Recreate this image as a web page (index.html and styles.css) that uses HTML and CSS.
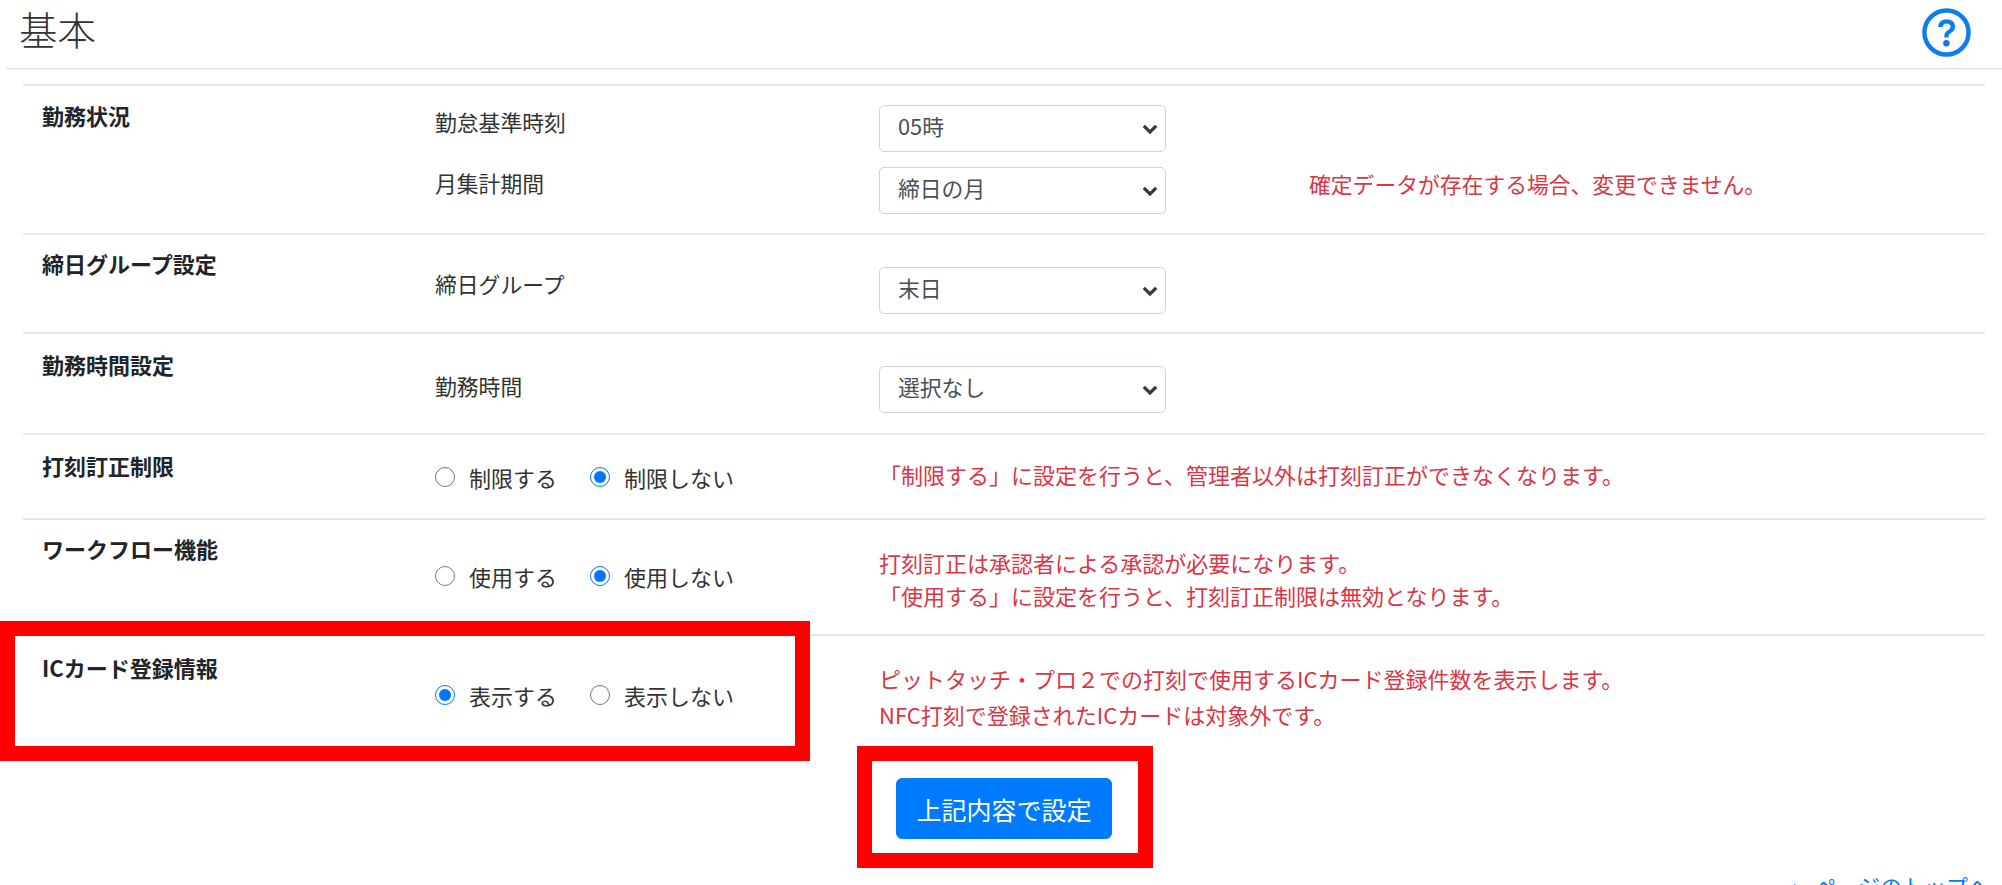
FILE: index.html
```html
<!DOCTYPE html>
<html lang="ja">
<head>
<meta charset="utf-8">
<title>基本</title>
<link rel="stylesheet" href="styles.css">
</head>
<body>
<main class="page">
  <header class="title-bar">
    <h1 class="title">基本</h1>
    <svg class="help" viewBox="0 0 50 50" aria-label="ヘルプ">
      <circle cx="25" cy="25" r="22.5" fill="none" stroke="#0d7bf2" stroke-width="4.5"/>
      <path d="M16.5 19.5c0-5 3.8-8 8.7-8 5 0 8.6 3 8.6 7.300 0 3.200-1.600 4.900-4 6.500-2 1.300-2.700 2.100-2.700 4.700h-4.400c0-3.800 1.100-5.500 3.600-7.200 2-1.300 2.900-2.200 2.900-3.800 0-2-1.600-3.300-3.900-3.300-2.500 0-4.100 1.500-4.200 3.800z" fill="#0d7bf2"/>
      <circle cx="24.900" cy="36" r="3.300" fill="#0d7bf2"/>
    </svg>
  </header>

  <section class="settings">
    <div class="row row-status">
      <div class="row-label">勤務状況</div>
      <div class="field-stack">
        <div class="field-line">
          <span class="field-name">勤怠基準時刻</span>
          <span class="select-wrap">
            <select class="select"><option>05時</option></select>
            <svg class="chevron" viewBox="0 0 16 10"><path d="M1.800 1.800 8 8l6.200-6.200" fill="none" stroke="#343a40" stroke-width="3.200"/></svg>
          </span>
        </div>
        <div class="field-line">
          <span class="field-name">月集計期間</span>
          <span class="select-wrap">
            <select class="select"><option>締日の月</option></select>
            <svg class="chevron" viewBox="0 0 16 10"><path d="M1.800 1.800 8 8l6.200-6.200" fill="none" stroke="#343a40" stroke-width="3.200"/></svg>
          </span>
          <span class="note note-side">確定データが存在する場合、変更できません。</span>
        </div>
      </div>
    </div>

    <div class="row row-group">
      <div class="row-label">締日グループ設定</div>
      <div class="field-stack">
        <div class="field-line">
          <span class="field-name">締日グループ</span>
          <span class="select-wrap">
            <select class="select"><option>末日</option></select>
            <svg class="chevron" viewBox="0 0 16 10"><path d="M1.800 1.800 8 8l6.200-6.200" fill="none" stroke="#343a40" stroke-width="3.200"/></svg>
          </span>
        </div>
      </div>
    </div>

    <div class="row row-time">
      <div class="row-label">勤務時間設定</div>
      <div class="field-stack">
        <div class="field-line">
          <span class="field-name">勤務時間</span>
          <span class="select-wrap">
            <select class="select"><option>選択なし</option></select>
            <svg class="chevron" viewBox="0 0 16 10"><path d="M1.800 1.800 8 8l6.200-6.200" fill="none" stroke="#343a40" stroke-width="3.200"/></svg>
          </span>
        </div>
      </div>
    </div>

    <div class="row row-limit">
      <div class="row-label">打刻訂正制限</div>
      <div class="radios">
        <label class="radio"><input type="radio" name="limit"><span>制限する</span></label>
        <label class="radio"><input type="radio" name="limit" checked><span>制限しない</span></label>
      </div>
      <div class="note note-single">「制限する」に設定を行うと、管理者以外は打刻訂正ができなくなります。</div>
    </div>

    <div class="row row-flow">
      <div class="row-label">ワークフロー機能</div>
      <div class="radios">
        <label class="radio"><input type="radio" name="flow"><span>使用する</span></label>
        <label class="radio"><input type="radio" name="flow" checked><span>使用しない</span></label>
      </div>
      <div class="note note-flow">打刻訂正は承認者による承認が必要になります。<br>「使用する」に設定を行うと、打刻訂正制限は無効となります。</div>
    </div>

    <div class="row row-card">
      <div class="row-label">ICカード登録情報</div>
      <div class="radios">
        <label class="radio"><input type="radio" name="card" checked><span>表示する</span></label>
        <label class="radio"><input type="radio" name="card"><span>表示しない</span></label>
      </div>
      <div class="note note-card">ピットタッチ・プロ２での打刻で使用するICカード登録件数を表示します。<br>NFC打刻で登録されたICカードは対象外です。</div>
    </div>
  </section>

  <div class="actions">
    <button class="submit" type="button">上記内容で設定</button>
  </div>

  <a class="top-link" href="#"><span class="top-arrow">▲</span>ページのトップへ</a>

  <div class="mark mark-row"></div>
  <div class="mark mark-button"></div>
</main>
</body>
</html>
```

FILE: styles.css
```css
* { box-sizing: border-box; }

html, body {
  margin: 0;
  height: 885px;
  overflow: hidden;
  background: #fff;
}

body {
  font-family: "Noto Sans CJK JP", "Noto Sans", sans-serif;
  font-size: 22px;
  color: #212529;
}

.page {
  position: relative;
  height: 885px;
  overflow: hidden;
}

.title-bar {
  display: flex;
  justify-content: space-between;
  align-items: flex-start;
  height: 69px;
  margin-left: 6px;
  padding: 5px 31px 0 13px;
  border-bottom: 1px solid #dcdcdc;
}

.title {
  margin: 0;
  font-size: 38.500px;
  font-weight: 300;
  line-height: 46px;
  color: #333;
}

.help {
  width: 49px;
  height: 49px;
  margin-top: 3px;
}

.settings {
  margin: 15px 17px 0 23px;
  border-top: 2px solid #e4e6e9;
}

.row {
  display: grid;
  grid-template-columns: 412px 444px 1fr;
  border-bottom: 2px solid #e4e6e9;
}

.row:last-child { border-bottom: 0; }

.row-status { height: 149px; }
.row-group { height: 99px; }
.row-time { height: 101px; }
.row-limit { height: 85px; }
.row-flow { height: 116px; }
.row-card { height: 111px; }

.row-label {
  padding: 15px 0 0 19px;
  font-weight: 700;
  line-height: 32px;
}

.row-status .row-label { padding-top: 13px; }
.row-group .row-label { padding-top: 12px; }
.row-time .row-label { padding-top: 14px; }
.row-limit .row-label { padding-top: 14px; }
.row-flow .row-label { padding-top: 12px; }
.row-card .row-label { padding-top: 15px; }

.field-stack {
  grid-column: 2 / 4;
  display: flex;
  flex-direction: column;
  gap: 14px;
  padding-top: 18px;
}

.row-group .field-stack { padding-top: 31px; }
.row-time .field-stack { padding-top: 31px; }

.field-line {
  display: grid;
  grid-template-columns: 444px 287px 1fr;
  align-items: center;
  height: 48px;
}

.field-name {
  position: relative;
  top: -6px;
  font-size: 21.800px;
  line-height: 32px;
  color: #333;
}

.field-line + .field-line .field-name { top: -7px; }
.row-group .field-name { top: -6px; }
.row-time .field-name { top: -3px; }

.select-wrap {
  position: relative;
  display: block;
  width: 287px;
  height: 47px;
}

.select {
  display: block;
  width: 100%;
  height: 100%;
  padding: 0 40px 6px 18px;
  font-family: inherit;
  font-size: 21.800px;
  color: #495057;
  background: #fff;
  border: 1px solid #ced4da;
  border-radius: 5px;
  appearance: none;
}

.chevron {
  position: absolute;
  right: 8px;
  top: 19px;
  width: 16px;
  height: 10px;
  pointer-events: none;
}

.note {
  color: #dc3545;
  line-height: 34px;
  white-space: nowrap;
}

.note-side {
  position: relative;
  top: -6px;
  margin-left: 143px;
  font-size: 21.800px;
}

.note-single { padding-top: 22px; }
.note-flow { padding-top: 26px; line-height: 33px; }
.note-card { padding-top: 24px; line-height: 36px; }

.radios {
  display: flex;
  gap: 33px;
  padding-top: 26px;
  align-items: flex-start;
}

.row-flow .radios { padding-top: 40px; }
.row-card .radios { padding-top: 43px; }

.radio {
  display: flex;
  align-items: center;
  gap: 14px;
  height: 32px;
  color: #333;
}

.radio input {
  width: 20px;
  height: 20px;
  margin: 0;
  accent-color: #0075ff;
}

.actions {
  display: flex;
  justify-content: flex-start;
  padding: 31px 0 0 896px;
}

.submit {
  width: 216px;
  height: 61px;
  padding: 0;
  border: 1px solid #007bff;
  border-radius: 6px;
  background: #007bff;
  color: #fff;
  font-family: inherit;
  font-size: 25px;
}

.top-link {
  display: block;
  margin-top: 30px;
  padding-right: 12px;
  text-align: right;
  line-height: 32px;
  color: #007bff;
  text-decoration: none;
}

.top-arrow {
  font-size: 14px;
  margin-right: 13px;
}

.mark {
  position: absolute;
  border-style: solid;
  border-color: #f00;
  pointer-events: none;
}

.mark-row {
  left: 0;
  top: 621px;
  width: 810px;
  height: 140px;
  border-width: 15px;
}

.mark-button {
  left: 857px;
  top: 746px;
  width: 296px;
  height: 122px;
  border-width: 15px;
}
```
